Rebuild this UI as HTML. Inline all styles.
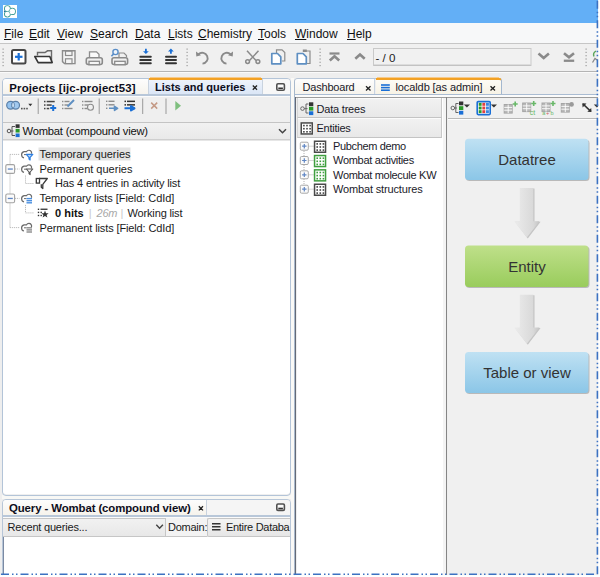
<!DOCTYPE html>
<html><head><meta charset="utf-8">
<style>
*{margin:0;padding:0;box-sizing:border-box}
html,body{width:600px;height:577px;overflow:hidden;background:#fff;font-family:"Liberation Sans",sans-serif;color:#000}
.a{position:absolute}
.t{position:absolute;white-space:nowrap;line-height:1}
.m{font-size:12px;color:#111}
.m u{text-decoration:underline;text-underline-offset:1px}
</style></head><body>
<div class="a" style="left:0;top:0;width:600px;height:577px;background:#f0f0f0;overflow:hidden">

<!-- title bar -->
<div class="a" style="left:0;top:0;width:598px;height:23px;background:#63aff6"></div>
<div class="a" style="left:3px;top:5px;width:14px;height:13px;background:#fff"></div>
<svg class="a" style="left:3px;top:5px" width="14" height="13" viewBox="0 0 14 13"><g fill="#fff" stroke="#45a09a" stroke-width="1.1"><circle cx="4.4" cy="3.7" r="2.9"/><circle cx="4.4" cy="9.1" r="2.9"/><circle cx="9.3" cy="6.4" r="3.1"/></g><g fill="#fff"><circle cx="4.4" cy="3.7" r="2.35"/><circle cx="4.4" cy="9.1" r="2.35"/><circle cx="9.3" cy="6.4" r="2.55"/></g><path d="M5.5 5.3 L7.6 6.4 L5.5 7.5 Z" fill="#a9d3d8"/><circle cx="1.6" cy="6.4" r="0.7" fill="#2b5fa8"/></svg>

<!-- menu bar -->
<div class="a" style="left:0;top:23px;width:598px;height:20px;background:#f7f8f9"></div>
<div class="a" style="left:0;top:43px;width:598px;height:1px;background:#c6c6c6"></div>
<div class="t m" style="left:4px;top:28px"><u>F</u>ile</div>
<div class="t m" style="left:29px;top:28px"><u>E</u>dit</div>
<div class="t m" style="left:57px;top:28px"><u>V</u>iew</div>
<div class="t m" style="left:90px;top:28px"><u>S</u>earch</div>
<div class="t m" style="left:135px;top:28px"><u>D</u>ata</div>
<div class="t m" style="left:168px;top:28px"><u>L</u>ists</div>
<div class="t m" style="left:198px;top:28px"><u>C</u>hemistry</div>
<div class="t m" style="left:258px;top:28px"><u>T</u>ools</div>
<div class="t m" style="left:295px;top:28px"><u>W</u>indow</div>
<div class="t m" style="left:347px;top:28px"><u>H</u>elp</div>

<!-- toolbar -->
<div class="a" style="left:0;top:44px;width:598px;height:27px;background:#f0f0f0"></div>
<div class="a" style="left:0;top:71px;width:598px;height:1px;background:#b4b4b4"></div>
<div class="a" style="left:0;top:72px;width:598px;height:1px;background:#fafafa"></div>


<!-- toolbar icons -->
<svg class="a" style="left:0;top:0" width="600" height="577" viewBox="0 0 600 577">
<g fill="#9a9a9a">
<rect x="2.5" y="48.5" width="1.2" height="1.2"/><rect x="2.5" y="51.8" width="1.2" height="1.2"/><rect x="2.5" y="55.1" width="1.2" height="1.2"/><rect x="2.5" y="58.4" width="1.2" height="1.2"/><rect x="2.5" y="61.7" width="1.2" height="1.2"/><rect x="2.5" y="65" width="1.2" height="1.2"/>
<rect x="186.5" y="48.5" width="1.2" height="1.2"/><rect x="186.5" y="51.8" width="1.2" height="1.2"/><rect x="186.5" y="55.1" width="1.2" height="1.2"/><rect x="186.5" y="58.4" width="1.2" height="1.2"/><rect x="186.5" y="61.7" width="1.2" height="1.2"/><rect x="186.5" y="65" width="1.2" height="1.2"/>
<rect x="319.5" y="48.5" width="1.2" height="1.2"/><rect x="319.5" y="51.8" width="1.2" height="1.2"/><rect x="319.5" y="55.1" width="1.2" height="1.2"/><rect x="319.5" y="58.4" width="1.2" height="1.2"/><rect x="319.5" y="61.7" width="1.2" height="1.2"/><rect x="319.5" y="65" width="1.2" height="1.2"/>
<rect x="585.5" y="48.5" width="1.2" height="1.2"/><rect x="585.5" y="51.8" width="1.2" height="1.2"/><rect x="585.5" y="55.1" width="1.2" height="1.2"/><rect x="585.5" y="58.4" width="1.2" height="1.2"/><rect x="585.5" y="61.7" width="1.2" height="1.2"/><rect x="585.5" y="65" width="1.2" height="1.2"/>
</g>
<!-- new -->
<rect x="12" y="50" width="13.5" height="13.5" rx="1.5" fill="#fff" stroke="#474747" stroke-width="2"/>
<rect x="15" y="55.7" width="7.5" height="2.2" fill="#1a6fd6"/><rect x="17.6" y="53" width="2.2" height="7.5" fill="#1a6fd6"/>
<!-- open -->
<path d="M37.5 55.5 V52.5 H45 L47.5 50.8 H51.5 V62" fill="none" stroke="#6a6a6a" stroke-width="1.4"/>
<path d="M34.8 56.5 H49.8 L52.2 62.6 H38.2 Z" fill="#fff" stroke="#363636" stroke-width="1.6" stroke-linejoin="round"/>
<!-- save -->
<path d="M62.5 50.8 H75 V63.6 H64.5 L62.5 61.6 Z" fill="#f4f4f4" stroke="#8c8c8c" stroke-width="1.4"/>
<rect x="65.5" y="51" width="6.5" height="4.5" fill="none" stroke="#8c8c8c" stroke-width="1.2"/>
<rect x="65.5" y="58.8" width="6.5" height="4.8" fill="none" stroke="#8c8c8c" stroke-width="1.2"/>
<!-- print -->
<path d="M89.5 57.5 V51.8 H96.5 L99 54.3 V57.5" fill="#fafafa" stroke="#8c8c8c" stroke-width="1.3"/>
<rect x="86.3" y="57.8" width="16" height="6.7" rx="2" fill="none" stroke="#8a8a8a" stroke-width="1.6"/>
<rect x="89" y="61.3" width="10.5" height="3.4" fill="#f4f4f4" stroke="#8a8a8a" stroke-width="1.3"/>
<!-- print preview -->
<path d="M119 57.5 V53 L124 53 L126.5 55.5 V57.5" fill="none" stroke="#8c8c8c" stroke-width="1.2"/>
<rect x="112" y="57.8" width="15.6" height="6.7" rx="2" fill="none" stroke="#8a8a8a" stroke-width="1.6"/>
<rect x="114.7" y="61.3" width="10.5" height="3.4" fill="#f4f4f4" stroke="#8a8a8a" stroke-width="1.3"/>
<circle cx="115.5" cy="52" r="2.6" fill="#eef4fb" stroke="#5a8ec8" stroke-width="1.4"/>
<path d="M113.6 53.9 L111.4 56.2" stroke="#5a8ec8" stroke-width="1.6"/>
<!-- import -->
<path d="M145 48.8 h1.8 v2.4 h2 l-2.9 2.8 l-2.9 -2.8 h2 z" fill="#1a6fd6"/>
<g stroke="#333" stroke-width="2" stroke-linecap="round"><path d="M140.3 56.8 H150.8 M140.3 60 H150.8 M140.3 63.2 H150.8"/></g>
<!-- export -->
<path d="M170 53.8 h1.8 v-2.4 h2 l-2.9 -2.8 l-2.9 2.8 h2 z" fill="#1a6fd6"/>
<g stroke="#333" stroke-width="2" stroke-linecap="round"><path d="M166 56.8 H176 M166 60 H176 M166 63.2 H176"/></g>
<!-- undo -->
<path d="M198.5 54.3 A5.4 5.4 0 1 1 202.5 63.6" fill="none" stroke="#8a8a8a" stroke-width="1.9"/>
<path d="M196 51.5 L196.3 56.6 L201 55.2 Z" fill="#8a8a8a"/>
<!-- redo -->
<path d="M230.5 54.3 A5.4 5.4 0 1 0 226.5 63.6" fill="none" stroke="#8a8a8a" stroke-width="1.9"/>
<path d="M233 51.5 L232.7 56.6 L228 55.2 Z" fill="#8a8a8a"/>
<!-- cut -->
<g fill="none" stroke="#8a8a8a" stroke-width="1.5"><path d="M247 50.8 L256 60.5 M258.5 50.8 L249.5 60.5"/><circle cx="247.6" cy="61.6" r="1.9"/><circle cx="257.9" cy="61.6" r="1.9"/></g>
<!-- copy -->
<path d="M276.5 53 V49.8 H282 L284.8 52.6 V61 H282" fill="none" stroke="#8c8c8c" stroke-width="1.2"/>
<path d="M271.8 53.5 H277.5 L280.8 56.8 V63.8 H271.8 Z" fill="#fff" stroke="#5e8fc2" stroke-width="1.7" stroke-linejoin="round"/>
<!-- paste -->
<path d="M304 51 H310 V63.5 H307" fill="none" stroke="#8c8c8c" stroke-width="1.2"/>
<rect x="302.8" y="49.5" width="4" height="2.5" fill="#8c8c8c"/>
<path d="M297.3 53.5 H303 L306.3 56.8 V63.8 H297.3 Z" fill="#fff" stroke="#5e8fc2" stroke-width="1.7" stroke-linejoin="round"/>
<!-- first / up / down / last -->
<g fill="none" stroke="#8a8a8a" stroke-width="2.6" stroke-linejoin="miter">
<path d="M329.8 60.5 L334.5 56.3 L339.2 60.5"/>
<path d="M355.3 58.8 L360 54.6 L364.7 58.8"/>
<path d="M538.5 53.6 L543.7 58 L548.9 53.6"/>
<path d="M564 53.2 L569 57.3 L574 53.2"/>
</g>
<rect x="329.5" y="52.4" width="10" height="2.2" fill="#8a8a8a"/>
<rect x="563.8" y="59.6" width="10.4" height="2.3" fill="#8a8a8a"/>
<!-- text field -->
<rect x="373.5" y="48.5" width="157.5" height="17" fill="#f1f1f1" stroke="#c9c9c9" stroke-width="1"/><rect x="374" y="64.6" width="156.5" height="1" fill="#bdbdbd"/>
<!-- partial icon at right -->
<path d="M596 51 Q592.5 53 594 56.5" fill="none" stroke="#5aa55a" stroke-width="1.4"/>
<path d="M592.5 62.5 L595 58.5 L597 60" fill="none" stroke="#8a8a8a" stroke-width="1.3"/>
</svg>
<div class="t" style="left:375.5px;top:52px;font-size:11.6px;color:#222">- / 0</div>

<!-- window area bg -->
<div class="a" style="left:0;top:73px;width:598px;height:502px;background:#eeeeee"></div>


<!-- LEFT WINDOW -->
<div class="a" style="left:291px;top:78px;width:3px;height:497px;background:#faf9f6"></div>
<div class="a" style="left:2px;top:495px;width:289px;height:4px;background:#f8f8f5"></div>
<div class="a" style="left:2px;top:78px;width:289px;height:418px;border:1px solid #b3c4d8;border-radius:4px;background:#efefef"></div>
<!-- tab strip -->
<div class="a" style="left:3px;top:79px;width:146px;height:16px;background:linear-gradient(#fdfdfd,#f6f3ec);border-right:1px solid #c9d3df;border-radius:3px 0 0 0"></div>
<div class="a" style="left:149px;top:78px;width:113px;height:17px;background:linear-gradient(#eef3fb,#d9e5f6);border-top:2px solid #f2a124"></div><div class="a" style="left:150px;top:77px;width:111px;height:1px;background:#f6c98a"></div>
<div class="a" style="left:262px;top:79px;width:28px;height:15px;background:#f7f7f7;border-left:1px solid #c9d3df;border-radius:0 3px 0 0"></div>
<div class="a" style="left:3px;top:94px;width:287px;height:2px;background:#b8c7d9"></div>
<div class="a" style="left:3px;top:96px;width:287px;height:1px;background:#fbfbfb"></div>
<div class="t" style="left:9.3px;top:83px;font-size:11.4px;font-weight:bold;color:#0d0d1c;letter-spacing:0.15px">Projects [ijc-project53]</div>
<div class="t" style="left:155px;top:81.7px;font-size:11px;font-weight:bold;color:#0d0d1c">Lists and queries</div>
<svg class="a" style="left:0;top:0" width="600" height="577" viewBox="0 0 600 577">
<path d="M252.8 85.5 L257 89.7 M257 85.5 L252.8 89.7" stroke="#222" stroke-width="1.3"/>
<rect x="276.8" y="83.8" width="7.6" height="6.4" rx="1.2" fill="#fafafa" stroke="#505050" stroke-width="1.6"/>
<rect x="278.3" y="87.5" width="4.6" height="1.5" fill="#333"/>
<!-- sub toolbar -->
<circle cx="10.6" cy="105.2" r="3.9" fill="#93c2ef" stroke="#5b7fa6" stroke-width="1.2"/>
<circle cx="15.6" cy="105.2" r="3.9" fill="#93c2ef" stroke="#5b7fa6" stroke-width="1.2" fill-opacity="0.85"/>
<path d="M13.1 102.2 A3.9 3.9 0 0 1 13.1 108.2 A3.9 3.9 0 0 1 13.1 102.2" fill="#cfe3f7" stroke="#5b7fa6" stroke-width="0.8"/>
<g fill="#555"><rect x="21" y="107.8" width="1.6" height="1.6"/><rect x="23.6" y="107.8" width="1.6" height="1.6"/><rect x="26.2" y="107.8" width="1.6" height="1.6"/></g>
<path d="M28.3 103.8 H32.3 L30.3 106.2 Z" fill="#333"/>
<rect x="37.7" y="98.5" width="1" height="15.5" fill="#9a9a9a"/>
<g fill="#444"><rect x="44" y="100.8" width="1.5" height="1.5"/><rect x="46.7" y="100.8" width="8" height="1.5"/><rect x="44" y="104.3" width="1.5" height="1.5"/><rect x="46.7" y="104.3" width="5" height="1.5"/><rect x="44" y="107.8" width="1.5" height="1.5"/><rect x="46.7" y="107.8" width="2.5" height="1.5"/></g>
<path d="M50.2 108.1 H56.2 M53.2 105.1 V111.1" stroke="#1a6fd6" stroke-width="2"/>
<g fill="#8c8c8c"><rect x="62" y="100.8" width="1.4" height="1.4"/><rect x="64.5" y="100.8" width="5" height="1.4"/><rect x="62" y="104.3" width="1.4" height="1.4"/><rect x="64.5" y="104.3" width="3.5" height="1.4"/><rect x="62" y="107.8" width="1.4" height="1.4"/><rect x="64.5" y="107.8" width="8" height="1.4"/></g>
<path d="M67.5 106.5 L74 100" stroke="#5e8fc2" stroke-width="2"/>
<g fill="#8c8c8c"><rect x="82" y="100.8" width="1.4" height="1.4"/><rect x="84.5" y="100.8" width="8" height="1.4"/><rect x="82" y="104.3" width="1.4" height="1.4"/><rect x="84.5" y="104.3" width="4" height="1.4"/><rect x="82" y="107.8" width="1.4" height="1.4"/><rect x="84.5" y="107.8" width="3" height="1.4"/></g>
<circle cx="90.5" cy="107.3" r="3" fill="#f0f0f0" stroke="#8c8c8c" stroke-width="1.1"/>
<rect x="98.7" y="98.5" width="1" height="15.5" fill="#9a9a9a"/>
<g fill="#8c8c8c"><rect x="106" y="100.6" width="1.4" height="1.4"/><rect x="108.5" y="100.6" width="6" height="1.4"/><rect x="106" y="104.1" width="1.4" height="1.4"/><rect x="108.5" y="104.1" width="6" height="1.4"/><rect x="106" y="107.6" width="1.4" height="1.4"/></g>
<path d="M109 108.3 H114.5 V106.3 L117.6 108.3 L114.5 110.3 V108.3" fill="#5e8fc2" stroke="#5e8fc2" stroke-width="1.6" stroke-linejoin="round"/>
<g fill="#333"><rect x="124.5" y="100.6" width="1.5" height="1.5"/><rect x="127" y="100.6" width="8" height="1.5"/><rect x="124.5" y="104.1" width="1.5" height="1.5"/><rect x="127" y="104.1" width="8" height="1.5"/><rect x="133" y="107.6" width="2" height="1.5"/></g>
<path d="M124.5 108.3 H131 V106.1 L134.5 108.3 L131 110.5 V108.3" fill="#1a6fd6" stroke="#1a6fd6" stroke-width="2" stroke-linejoin="round"/>
<rect x="142.2" y="98.5" width="1" height="15.5" fill="#9a9a9a"/>
<path d="M151.2 102.6 L157.2 108.6 M157.2 102.6 L151.2 108.6" stroke="#c49a86" stroke-width="1.5"/>
<rect x="165.5" y="98.5" width="1" height="15.5" fill="#9a9a9a"/>
<path d="M175.3 101 L181 105.7 L175.3 110.4 Z" fill="#7fbf7f"/>
<!-- combo -->
</svg>
<div class="a" style="left:3px;top:122px;width:287px;height:18px;background:linear-gradient(#f1f1f1,#e9e9e9);border-top:1px solid #c4c4c4;border-bottom:1px solid #cfcfcf"></div>
<div class="a" style="left:3px;top:140px;width:287px;height:354px;background:#fff;border-top:1px solid #e6e6e6;border-radius:0 0 3px 3px"></div>
<div class="t" style="left:22.5px;top:126px;font-size:11.2px;color:#111;letter-spacing:-0.2px">Wombat (compound view)</div>
<svg class="a" style="left:0;top:0" width="600" height="577" viewBox="0 0 600 577">
<g fill="none" stroke="#555" stroke-width="1"><circle cx="9" cy="131" r="1.8"/><path d="M10.8 131 H13.5 M12 131 V126.5 H15 M12 131 V135.5 H15"/></g>
<rect x="15.6" y="124.3" width="4" height="3.6" fill="#333"/><rect x="15.6" y="128.9" width="4" height="3.6" fill="#2a9a2a"/><rect x="15.6" y="133.5" width="4" height="3.6" fill="#1a6fd6"/>
<path d="M279 129.3 L282.5 132.8 L286 129.3" fill="none" stroke="#444" stroke-width="1.5"/>
<rect x="38.5" y="147.5" width="92" height="13" fill="#e4e4e4"/>
<g stroke="#bdbdbd" stroke-width="1" stroke-dasharray="1.2 0.8" fill="none"><path d="M10 154.4 V227.6"/><path d="M10 154.4 H19.5"/><path d="M10 227.6 H19.5"/><path d="M15 169.0 H19.5"/><path d="M15 198.4 H19.5"/><path d="M25.5 175.5 V183.5 H34"/><path d="M25.5 204.9 V212.9 H34"/></g>
<rect x="5.8" y="164.6" width="8.8" height="8.8" rx="1.5" fill="#fbfbfb" stroke="#a3a3a3" stroke-width="1.1"/><rect x="7.8" y="168.4" width="5" height="1.3" fill="#5f86c4"/>
<rect x="5.8" y="194.0" width="8.8" height="8.8" rx="1.5" fill="#fbfbfb" stroke="#a3a3a3" stroke-width="1.1"/><rect x="7.8" y="197.8" width="5" height="1.3" fill="#5f86c4"/>
<path d="M24.0 157.8 A3.2 3.2 0 0 1 24.0 151.60000000000002 H26.5 A2.8 2.8 0 0 1 31.5 152.0 V153.8" fill="none" stroke="#6a6a6a" stroke-width="1.2"/><path d="M24.0 154.60000000000002 H26.5" stroke="#6a6a6a" stroke-width="1"/><path d="M24.0 172.4 A3.2 3.2 0 0 1 24.0 166.20000000000002 H26.5 A2.8 2.8 0 0 1 31.5 166.6 V168.4" fill="none" stroke="#6a6a6a" stroke-width="1.2"/><path d="M24.0 169.20000000000002 H26.5" stroke="#6a6a6a" stroke-width="1"/><path d="M24.0 201.8 A3.2 3.2 0 0 1 24.0 195.60000000000002 H26.5 A2.8 2.8 0 0 1 31.5 196.0 V197.8" fill="none" stroke="#6a6a6a" stroke-width="1.2"/><path d="M24.0 198.60000000000002 H26.5" stroke="#6a6a6a" stroke-width="1"/><path d="M24.0 231.0 A3.2 3.2 0 0 1 24.0 224.8 H26.5 A2.8 2.8 0 0 1 31.5 225.2 V227.0" fill="none" stroke="#6a6a6a" stroke-width="1.2"/><path d="M24.0 227.8 H26.5" stroke="#6a6a6a" stroke-width="1"/><path d="M26.3 154.4 H32.8 L30.1 157.4 V160.0 L29 159.0 V157.4 Z" fill="#bcd8f7" stroke="#2f7fe0" stroke-width="1.2" stroke-linejoin="round"/><path d="M26.3 169.0 H32.8 L30.1 172.0 V174.6 L29 173.6 V172.0 Z" fill="#fff" stroke="#555" stroke-width="1.1" stroke-linejoin="round"/><path d="M39 178.5 H47.3 L42.8 184.3 V188.5 L41.3 187.3 V184.3" fill="none" stroke="#3a3a3a" stroke-width="1.3" stroke-linejoin="round"/><rect x="36.3" y="178.5" width="3.2" height="4.6" fill="#fff" stroke="#3a3a3a" stroke-width="1.3"/><g fill="#4a8fe0"><rect x="26.5" y="197.9" width="5.5" height="1.4"/><rect x="26.5" y="200.0" width="5.5" height="1.4"/><rect x="26.5" y="202.1" width="5.5" height="1.4"/></g><g fill="#8a8a8a"><rect x="26.5" y="227.1" width="5.5" height="1.4"/><rect x="26.5" y="229.2" width="5.5" height="1.4"/><rect x="26.5" y="231.29999999999998" width="5.5" height="1.4"/></g><g fill="#333"><rect x="37.8" y="208.6" width="1.4" height="1.4"/><rect x="40.5" y="208.6" width="7" height="1.3"/><rect x="37.8" y="211.70000000000002" width="1.4" height="1.4"/><rect x="40.5" y="211.70000000000002" width="1.4" height="1.4"/><rect x="37.8" y="214.8" width="1.4" height="1.4"/><rect x="40.5" y="214.8" width="1.4" height="1.4"/></g><path d="M45 210.4 L46 213.20000000000002 L48.6 213.20000000000002 L46.6 214.9 L47.4 217.5 L45 215.9 L42.6 217.5 L43.4 214.9 L41.4 213.20000000000002 L44 213.20000000000002 Z" fill="#333"/></svg>
<div class="t" style="left:39.5px;top:149.39px;font-size:11px;color:#1a1a1a">Temporary queries</div>
<div class="t" style="left:39.5px;top:163.99px;font-size:11px;color:#1a1a1a">Permanent queries</div>
<div class="t" style="left:55px;top:178.49px;font-size:11px;color:#1a1a1a;letter-spacing:-0.15px">Has 4 entries in activity list</div>
<div class="t" style="left:39.5px;top:193.39px;font-size:11px;color:#1a1a1a;letter-spacing:-0.05px">Temporary lists [Field: CdId]</div>
<div class="t" style="left:55px;top:207.89px;font-size:11px;color:#111"><b>0 hits</b></div>
<div class="t" style="left:88.7px;top:207.89px;font-size:11px;color:#c8c8c8">|</div>
<div class="t" style="left:96.6px;top:207.89px;font-size:11px;color:#a8a8a8;letter-spacing:-0.3px"><i>26m</i></div>
<div class="t" style="left:120.5px;top:207.89px;font-size:11px;color:#c8c8c8">|</div>
<div class="t" style="left:127.5px;top:207.89px;font-size:11px;color:#1a1a1a;letter-spacing:-0.15px">Working list</div>
<div class="t" style="left:39.5px;top:222.59px;font-size:11px;color:#1a1a1a;letter-spacing:-0.12px">Permanent lists [Field: CdId]</div>

<!-- RIGHT WINDOW -->
<div class="a" style="left:294px;top:78px;width:310px;height:500px;border-left:1px solid #a9b9cc;border-top:1px solid #b7c6d8;border-radius:4px 0 0 0;background:#eeeeee"></div>
<div class="a" style="left:501px;top:78px;width:100px;height:1px;background:#eeeeee"></div>
<div class="a" style="left:295px;top:79px;width:80px;height:16px;background:linear-gradient(#fdfdfd,#f6f3ec);border-right:1px solid #c9d3df;border-radius:3px 0 0 0"></div>
<div class="a" style="left:377px;top:77px;width:122px;height:1px;background:#f6c98a"></div><div class="a" style="left:376px;top:78px;width:125.5px;height:17px;background:linear-gradient(#fdfbf5,#f7f2e4);border-top:2px solid #f2a124;border-right:1.5px solid #a3b7cf;border-radius:0 3px 0 0"></div>
<div class="a" style="left:295px;top:94px;width:303px;height:1.5px;background:#aabcd2"></div>
<div class="a" style="left:295px;top:95px;width:303px;height:2px;background:#fbfbfb"></div>
<div class="a" style="left:295px;top:97px;width:1px;height:478px;background:#646a76"></div>
<div class="a" style="left:296px;top:97px;width:302px;height:1px;background:#9c9c9c"></div>
<!-- left subpanel -->
<div class="a" style="left:296.5px;top:98px;width:147px;height:477px;background:#fff"></div>
<div class="a" style="left:297px;top:98px;width:145px;height:20px;background:linear-gradient(#f2f2f2,#e8e8e8);border-left:1px solid #d6d6d6;border-right:1px solid #c8c8c8;border-bottom:1px solid #c4c4c4;box-shadow:inset 0 1px 0 #fbfbfb"></div>
<div class="a" style="left:297px;top:118px;width:145px;height:20px;background:linear-gradient(#f2f2f2,#e8e8e8);border-left:1px solid #d6d6d6;border-right:1px solid #c8c8c8;border-bottom:1px solid #c4c4c4;box-shadow:inset 0 1px 0 #fbfbfb"></div>
<div class="a" style="left:443px;top:98px;width:3.5px;height:477px;background:#f4f4f4"></div>
<!-- right subpanel -->
<div class="a" style="left:446px;top:97px;width:1px;height:478px;background:#858585"></div>
<div class="a" style="left:447.5px;top:98px;width:150px;height:20px;background:#f0f0f0"></div>
<div class="a" style="left:447.5px;top:118px;width:150px;height:1px;background:#b9b9b9"></div>
<div class="a" style="left:447.5px;top:119px;width:150px;height:1px;background:#fdfdfd"></div>
<div class="a" style="left:447.5px;top:120px;width:150px;height:455px;background:#f0f0f0"></div>
<div class="t" style="left:302.5px;top:82.2px;font-size:11px;color:#1a1a2a;letter-spacing:-0.2px">Dashboard</div>
<div class="t" style="left:395.5px;top:82px;font-size:11px;color:#1a1a2a;letter-spacing:-0.1px">localdb [as admin]</div>
<div class="t" style="left:316.5px;top:103.5px;font-size:11px;color:#1a1a2a;letter-spacing:-0.2px">Data trees</div>
<div class="t" style="left:316.5px;top:123px;font-size:11px;color:#1a1a2a;letter-spacing:-0.25px">Entities</div>
<div class="t" style="left:333px;top:141px;font-size:11px;color:#1a1a2a;letter-spacing:-0.35px">Pubchem demo</div>
<div class="t" style="left:333px;top:155.3px;font-size:11px;color:#1a1a2a;letter-spacing:-0.3px">Wombat activities</div>
<div class="t" style="left:333px;top:169.6px;font-size:11px;color:#1a1a2a;letter-spacing:-0.3px">Wombat molecule KW</div>
<div class="t" style="left:333px;top:184px;font-size:11px;color:#1a1a2a;letter-spacing:-0.15px">Wombat structures</div>
<svg class="a" style="left:0;top:0" width="600" height="577" viewBox="0 0 600 577">
<path d="M366 86.2 L370.5 90.4 M370.5 86.2 L366 90.4" stroke="#222" stroke-width="1.3"/>
<g fill="#1a6fd6"><rect x="381" y="84.2" width="8.8" height="1.6"/><rect x="381" y="86.8" width="8.8" height="1.6"/><rect x="381" y="89.4" width="8.8" height="1.6"/></g>
<path d="M490.5 86.2 L495 90.4 M495 86.2 L490.5 90.4" stroke="#222" stroke-width="1.3"/>
<g fill="none" stroke="#666" stroke-width="1"><circle cx="302.5" cy="108.6" r="1.8"/><path d="M304.3 108.6 H307.5 M306 108.6 V104 H308.5 M306 108.6 V113 H308.5"/></g><rect x="309" y="102.3" width="4.3" height="3.8" fill="#333"/><rect x="309" y="106.8" width="4.3" height="3.8" fill="#2a9a2a"/><rect x="309" y="111.3" width="4.3" height="3.8" fill="#1a6fd6"/>
<rect x="301.25" y="122.95" width="11" height="11" fill="#fff" stroke="#4a4a4a" stroke-width="1.5"/><rect x="303.10" y="124.80" width="1.6" height="1.6" fill="#444"/><rect x="303.10" y="127.90" width="1.6" height="1.6" fill="#444"/><rect x="303.10" y="131.00" width="1.6" height="1.6" fill="#444"/><rect x="306.20" y="124.80" width="1.6" height="1.6" fill="#444"/><rect x="306.20" y="127.90" width="1.6" height="1.6" fill="#444"/><rect x="306.20" y="131.00" width="1.6" height="1.6" fill="#444"/><rect x="309.30" y="124.80" width="1.6" height="1.6" fill="#444"/><rect x="309.30" y="127.90" width="1.6" height="1.6" fill="#444"/><rect x="309.30" y="131.00" width="1.6" height="1.6" fill="#444"/><g stroke="#b0b0b0" stroke-width="1" stroke-dasharray="1 1"><path d="M304 149 V188.5"/><path d="M308.5 146.2 H313.5"/><path d="M308.5 160.5 H313.5"/><path d="M308.5 174.79999999999998 H313.5"/><path d="M308.5 189.2 H313.5"/></g><rect x="300.3" y="142.2" width="8" height="8" rx="1.3" fill="#fbfbfb" stroke="#a8a8a8" stroke-width="1"/><path d="M302.1 146.2 H306.5 M304.3 144.0 V148.39999999999998" stroke="#5f86c4" stroke-width="1.2"/><rect x="314.55" y="141.25" width="11" height="11" fill="#fff" stroke="#4a4a4a" stroke-width="1.5"/><rect x="316.40" y="143.10" width="1.6" height="1.6" fill="#444"/><rect x="316.40" y="146.20" width="1.6" height="1.6" fill="#444"/><rect x="316.40" y="149.30" width="1.6" height="1.6" fill="#444"/><rect x="319.50" y="143.10" width="1.6" height="1.6" fill="#444"/><rect x="319.50" y="146.20" width="1.6" height="1.6" fill="#444"/><rect x="319.50" y="149.30" width="1.6" height="1.6" fill="#444"/><rect x="322.60" y="143.10" width="1.6" height="1.6" fill="#444"/><rect x="322.60" y="146.20" width="1.6" height="1.6" fill="#444"/><rect x="322.60" y="149.30" width="1.6" height="1.6" fill="#444"/><rect x="300.3" y="156.5" width="8" height="8" rx="1.3" fill="#fbfbfb" stroke="#a8a8a8" stroke-width="1"/><path d="M302.1 160.5 H306.5 M304.3 158.3 V162.7" stroke="#5f86c4" stroke-width="1.2"/><rect x="314.55" y="155.55" width="11" height="11" fill="#fff" stroke="#3f9f3f" stroke-width="1.5"/><rect x="316.40" y="157.40" width="1.6" height="1.6" fill="#3f9f3f"/><rect x="316.40" y="160.50" width="1.6" height="1.6" fill="#3f9f3f"/><rect x="316.40" y="163.60" width="1.6" height="1.6" fill="#3f9f3f"/><rect x="319.50" y="157.40" width="1.6" height="1.6" fill="#3f9f3f"/><rect x="319.50" y="160.50" width="1.6" height="1.6" fill="#3f9f3f"/><rect x="319.50" y="163.60" width="1.6" height="1.6" fill="#3f9f3f"/><rect x="322.60" y="157.40" width="1.6" height="1.6" fill="#3f9f3f"/><rect x="322.60" y="160.50" width="1.6" height="1.6" fill="#3f9f3f"/><rect x="322.60" y="163.60" width="1.6" height="1.6" fill="#3f9f3f"/><rect x="300.3" y="170.79999999999998" width="8" height="8" rx="1.3" fill="#fbfbfb" stroke="#a8a8a8" stroke-width="1"/><path d="M302.1 174.79999999999998 H306.5 M304.3 172.6 V176.99999999999997" stroke="#5f86c4" stroke-width="1.2"/><rect x="314.55" y="169.85" width="11" height="11" fill="#fff" stroke="#3f9f3f" stroke-width="1.5"/><rect x="316.40" y="171.70" width="1.6" height="1.6" fill="#3f9f3f"/><rect x="316.40" y="174.80" width="1.6" height="1.6" fill="#3f9f3f"/><rect x="316.40" y="177.90" width="1.6" height="1.6" fill="#3f9f3f"/><rect x="319.50" y="171.70" width="1.6" height="1.6" fill="#3f9f3f"/><rect x="319.50" y="174.80" width="1.6" height="1.6" fill="#3f9f3f"/><rect x="319.50" y="177.90" width="1.6" height="1.6" fill="#3f9f3f"/><rect x="322.60" y="171.70" width="1.6" height="1.6" fill="#3f9f3f"/><rect x="322.60" y="174.80" width="1.6" height="1.6" fill="#3f9f3f"/><rect x="322.60" y="177.90" width="1.6" height="1.6" fill="#3f9f3f"/><rect x="300.3" y="185.2" width="8" height="8" rx="1.3" fill="#fbfbfb" stroke="#a8a8a8" stroke-width="1"/><path d="M302.1 189.2 H306.5 M304.3 187.0 V191.39999999999998" stroke="#5f86c4" stroke-width="1.2"/><rect x="314.55" y="184.25" width="11" height="11" fill="#fff" stroke="#4a4a4a" stroke-width="1.5"/><rect x="316.40" y="186.10" width="1.6" height="1.6" fill="#444"/><rect x="316.40" y="189.20" width="1.6" height="1.6" fill="#444"/><rect x="316.40" y="192.30" width="1.6" height="1.6" fill="#444"/><rect x="319.50" y="186.10" width="1.6" height="1.6" fill="#444"/><rect x="319.50" y="189.20" width="1.6" height="1.6" fill="#444"/><rect x="319.50" y="192.30" width="1.6" height="1.6" fill="#444"/><rect x="322.60" y="186.10" width="1.6" height="1.6" fill="#444"/><rect x="322.60" y="189.20" width="1.6" height="1.6" fill="#444"/><rect x="322.60" y="192.30" width="1.6" height="1.6" fill="#444"/>
<g fill="none" stroke="#666" stroke-width="1"><circle cx="452.8" cy="108" r="1.8"/><path d="M454.6 108 H457 M455.8 108 V103.5 H458.5 M455.8 108 V112.5 H458.5"/></g><rect x="459" y="101.5" width="4.3" height="3.8" fill="#333"/><rect x="459" y="106.2" width="4.3" height="3.8" fill="#2a9a2a"/><rect x="459" y="110.8" width="4.3" height="3.8" fill="#1a6fd6"/><path d="M463.8 104.6 H470 L466.9 107.6 Z" fill="#333"/><rect x="477.2" y="101.6" width="13" height="13" rx="1" fill="#fff" stroke="#1a6fd6" stroke-width="1.6"/><rect x="478.70" y="102.90" width="2.9" height="2.9" fill="#2a9a2a"/><rect x="478.70" y="106.55" width="2.9" height="2.9" fill="#2a9a2a"/><rect x="478.70" y="110.20" width="2.9" height="2.9" fill="#2a9a2a"/><rect x="482.35" y="102.90" width="2.9" height="2.9" fill="#e04040"/><rect x="482.35" y="106.55" width="2.9" height="2.9" fill="#e04040"/><rect x="482.35" y="110.20" width="2.9" height="2.9" fill="#e04040"/><rect x="486.00" y="102.90" width="2.9" height="2.9" fill="#3a86e0"/><rect x="486.00" y="106.55" width="2.9" height="2.9" fill="#3a86e0"/><rect x="486.00" y="110.20" width="2.9" height="2.9" fill="#3a86e0"/><path d="M490.8 104.6 H497 L493.9 107.6 Z" fill="#333"/><rect x="504.2" y="104.5" width="8" height="8.6" fill="#b9b9b9" stroke="#a5a5a5" stroke-width="1"/><path d="M504.2 107.4 H512.2 M504.2 110.2 H512.2 M508.2 104.5 V113.1" stroke="#fff" stroke-width="0.9"/><path d="M512.7 104.0 H517.7 M515.2 101.5 V106.5" stroke="#69b869" stroke-width="1.6"/><rect x="522.7" y="103.0" width="8" height="8.6" fill="#b9b9b9" stroke="#a5a5a5" stroke-width="1"/><path d="M522.7 105.9 H530.7 M522.7 108.7 H530.7 M526.7 103 V111.6" stroke="#fff" stroke-width="0.9"/><path d="M531.2 103.5 H536.2 M533.7 101 V106" stroke="#69b869" stroke-width="1.6"/><text x="529.8" y="115" font-family="Liberation Sans" font-size="7" fill="#69b869">ct</text><rect x="542.0" y="103.0" width="8" height="8.6" fill="#b9b9b9" stroke="#a5a5a5" stroke-width="1"/><path d="M542 105.9 H550 M542 108.7 H550 M546 103 V111.6" stroke="#fff" stroke-width="0.9"/><path d="M550.5 103.5 H555.5 M553.0 101 V106" stroke="#69b869" stroke-width="1.6"/><text x="542.2" y="114.6" font-family="Liberation Sans" font-size="5.6" fill="#69b869">a</text><text x="546" y="114.6" font-family="Liberation Sans" font-size="5.6" fill="#d06060">+</text><text x="550.5" y="114.6" font-family="Liberation Sans" font-size="5.6" fill="#69b869">b</text><rect x="561.3" y="103.5" width="8" height="8.6" fill="#b9b9b9" stroke="#a5a5a5" stroke-width="1"/><path d="M561.3 106.4 H569.3 M561.3 109.2 H569.3 M565.3 103.5 V112.1" stroke="#fff" stroke-width="0.9"/><circle cx="571.6" cy="104.4" r="2.3" fill="#9a9a9a"/><path d="M583 104 L590.8 111.4" stroke="#333" stroke-width="1.6"/><path d="M582.3 103.3 L586.5 103.6 L582.6 107.5 Z M591.5 112.1 L587.3 111.8 L591.2 107.9 Z" fill="#333"/><path d="M593.8 104.6 H600 L596.9 107.6 Z" fill="#333"/>
<defs>
<linearGradient id="gb" x1="0" y1="0" x2="0" y2="1"><stop offset="0" stop-color="#bfe1f3"/><stop offset="1" stop-color="#8bc6e7"/></linearGradient>
<linearGradient id="gg" x1="0" y1="0" x2="0" y2="1"><stop offset="0" stop-color="#bfe08a"/><stop offset="1" stop-color="#99cc5c"/></linearGradient>
<linearGradient id="ga" x1="0" y1="0" x2="1" y2="0"><stop offset="0" stop-color="#ececec"/><stop offset="0.75" stop-color="#d9d9d9"/><stop offset="1" stop-color="#c4c4c4"/></linearGradient>
</defs>
<rect x="466" y="139.8" width="123.5" height="41.19999999999999" rx="3.5" fill="#8c8c8c" opacity="0.55"/><rect x="465" y="138.8" width="123.5" height="41.19999999999999" rx="3.5" fill="url(#gb)"/><rect x="466" y="246.4" width="123.5" height="41.599999999999994" rx="3.5" fill="#8c8c8c" opacity="0.55"/><rect x="465" y="245.4" width="123.5" height="41.599999999999994" rx="3.5" fill="url(#gg)"/><rect x="466" y="353" width="123.5" height="41" rx="3.5" fill="#8c8c8c" opacity="0.55"/><rect x="465" y="352" width="123.5" height="41" rx="3.5" fill="url(#gb)"/><path d="M521 188.5 H534.5 V221.8 H540.6 L527.8 238.60000000000002 L515.1 221.8 H521 Z" fill="#a8a8a8" opacity="0.6"/><path d="M519.8 188 H533.3 V221.3 H539.5 L526.8 237.60000000000002 L514.1 221.3 H519.8 Z" fill="url(#ga)"/><path d="M521 295.2 H534.5 V328.0 H540.6 L527.8 344.8 L515.1 328.0 H521 Z" fill="#a8a8a8" opacity="0.6"/><path d="M519.8 294.7 H533.3 V327.5 H539.5 L526.8 343.8 L514.1 327.5 H519.8 Z" fill="url(#ga)"/><text x="527" y="165" text-anchor="middle" font-family="Liberation Sans" font-size="15" fill="#333">Datatree</text>
<text x="527" y="271.6" text-anchor="middle" font-family="Liberation Sans" font-size="15" fill="#333">Entity</text>
<text x="527" y="378.3" text-anchor="middle" font-family="Liberation Sans" font-size="15" fill="#333">Table or view</text>
</svg>

<!-- BOTTOM LEFT PANEL -->
<div class="a" style="left:2px;top:499px;width:289px;height:80px;border:1px solid #b7c6d8;border-radius:4px 4px 0 0;background:#efefef"></div>
<div class="a" style="left:3px;top:500px;width:204px;height:15px;background:linear-gradient(#fdfdfd,#f6f3ec);border-right:1px solid #c9d3df;border-radius:3px 0 0 0"></div>
<div class="a" style="left:207px;top:500px;width:83px;height:15px;background:#f5f5f5;border-radius:0 3px 0 0"></div>
<div class="a" style="left:3px;top:515px;width:287px;height:2px;background:#b8c7d9"></div>
<div class="a" style="left:3px;top:517px;width:287px;height:1px;background:#fbfbfb"></div>
<div class="a" style="left:3px;top:518px;width:163px;height:19px;background:linear-gradient(#f1f1f1,#e8e8e8);border:1px solid #c6c6c6;border-left:none"></div>
<div class="a" style="left:166px;top:518px;width:41px;height:19px;background:#f3f3f3;border-bottom:1px solid #c6c6c6"></div>
<div class="a" style="left:207px;top:518px;width:83px;height:19px;background:linear-gradient(#f3f3f3,#e6e6e6);border:1px solid #c6c6c6;border-right:none;border-radius:2px 0 0 2px"></div>
<div class="a" style="left:3px;top:537px;width:287px;height:40px;background:#fff"></div>
<div class="a" style="left:2.5px;top:537px;width:1.5px;height:38px;background:#7b8aa3"></div>
<div class="t" style="left:9px;top:503px;font-size:11.4px;font-weight:bold;color:#0d0d1c;letter-spacing:-0.1px">Query - Wombat (compound view)</div>
<div class="t" style="left:7.5px;top:521.5px;font-size:11px;color:#1a1a1a;letter-spacing:-0.2px">Recent queries...</div>
<div class="t" style="left:168px;top:521.5px;font-size:11px;color:#1a1a1a;letter-spacing:-0.25px">Domain:</div>
<div class="t" style="left:226px;top:521.5px;font-size:11px;color:#1a1a1a;letter-spacing:-0.3px">Entire Databa</div>
<svg class="a" style="left:0;top:0" width="600" height="577" viewBox="0 0 600 577">
<path d="M198.8 506.2 L203 510.4 M203 506.2 L198.8 510.4" stroke="#222" stroke-width="1.3"/>
<rect x="276.8" y="504" width="7.6" height="6.4" rx="1.2" fill="#fafafa" stroke="#505050" stroke-width="1.6"/>
<rect x="278.3" y="507.7" width="4.6" height="1.5" fill="#333"/>
<path d="M156.3 524.8 L159.6 528.3 L162.9 524.8" fill="none" stroke="#444" stroke-width="1.4"/>
<g fill="#333"><rect x="212" y="523" width="8.5" height="1.5"/><rect x="212" y="526" width="8.5" height="1.5"/><rect x="212" y="529" width="8.5" height="1.5"/></g>
</svg>

<svg class="a" style="left:0;top:0" width="600" height="577" viewBox="0 0 600 577">
<rect x="598.2" y="0" width="2" height="577" fill="#fff"/><rect x="0" y="575.1" width="600" height="2" fill="#fff"/>
<path d="M594 574.3 H0" fill="none" stroke="#3c72c2" stroke-width="1.6" stroke-dasharray="8 3 1.5 2.5 1.5 3"/>
<path d="M597.4 574.3 V0" fill="none" stroke="#3c72c2" stroke-width="1.6" stroke-dasharray="8 3 1.5 2.5 1.5 3"/>
</svg>
</div>
</body></html>
